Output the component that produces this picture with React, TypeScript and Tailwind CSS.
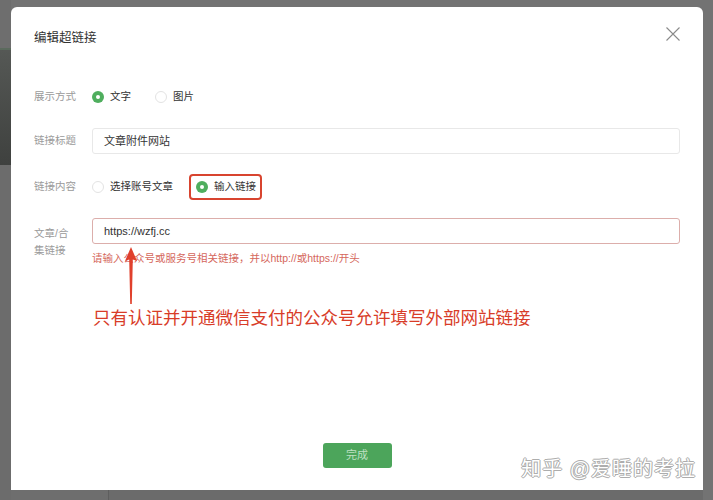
const font = { fontFamily: '"Liberation Sans", "Noto Sans CJK SC", sans-serif' }

function Radio({ checked }: { checked?: boolean }) {
  return checked ? (
    <span className="flex h-[12px] w-[12px] shrink-0 items-center justify-center rounded-full bg-[#4fae5e]">
      <span className="h-[4px] w-[4px] rounded-full bg-white" />
    </span>
  ) : (
    <span className="h-[12px] w-[12px] shrink-0 rounded-full border border-[#e3e3e3] bg-white" />
  )
}

export default function App() {
  return (
    <div
      className="flex h-[500px] w-[713px] overflow-hidden bg-[#737373] text-[#333]"
      style={font}
    >
      {/* page behind the modal */}
      <div className="flex w-[11px] shrink-0 flex-col">
        <div className="h-[48px] bg-[#6e6e6e]" />
        <div className="h-[2px] bg-[#5b6a5d]" />
        <div className="h-[115px] bg-gradient-to-b from-[#555855] to-[#3f413f]" />
        <div className="flex-1 bg-[#6c6c6c]" />
      </div>

      <div className="flex w-[692px] shrink-0 flex-col">
        <div className="h-[7px] shrink-0" />

        {/* modal */}
        <div className="relative flex h-[483px] flex-col rounded-t-[6px] bg-white px-[23px]">
          <div className="flex items-start justify-between pt-[24px]">
            <h1 className="text-[12.5px] leading-[14px] text-[#333]">编辑超链接</h1>
            <svg className="mr-[0px] mt-[-4px]" width="14" height="14" viewBox="0 0 14 14">
              <path d="M0.5 0.5 L13.5 13.5 M13.5 0.5 L0.5 13.5" stroke="#8a8a8a" strokeWidth="1.1" />
            </svg>
          </div>

          <div className="mt-[39px] flex flex-col">
            {/* 展示方式 */}
            <div className="flex h-[26px] items-center">
              <span className="w-[58px] shrink-0 text-[10.5px] text-[#9a9a9a]">展示方式</span>
              <label className="flex items-center gap-[6px] text-[10.5px] text-[#333]">
                <Radio checked />
                文字
              </label>
              <label className="ml-[24px] flex items-center gap-[6px] text-[10.5px] text-[#333]">
                <Radio />
                图片
              </label>
            </div>

            {/* 链接标题 */}
            <div className="mt-[18px] flex h-[26px] items-center">
              <span className="w-[58px] shrink-0 text-[10.5px] text-[#9a9a9a]">链接标题</span>
              <div className="flex h-[26px] w-[588px] items-center rounded-[3px] border border-[#e8e8e8] pl-[11px] text-[11px] text-[#333]">
                文章附件网站
              </div>
            </div>

            {/* 链接内容 */}
            <div className="mt-[20px] flex h-[26px] items-center">
              <span className="w-[58px] shrink-0 text-[10.5px] text-[#9a9a9a]">链接内容</span>
              <label className="flex items-center gap-[6px] text-[10.5px] text-[#333]">
                <Radio />
                选择账号文章
              </label>
              <label className="ml-[16px] flex h-[26px] items-center gap-[6px] rounded-[4px] border-2 border-[#d8442f] pl-[5px] pr-[4px] text-[10.5px] text-[#333]">
                <Radio checked />
                输入链接
              </label>
            </div>

            {/* 文章/合集链接 */}
            <div className="mt-[18px] flex items-start">
              <span className="w-[58px] shrink-0 pt-[7px] text-[10.5px] leading-[17px] text-[#9a9a9a]">
                文章/合
                <br />
                集链接
              </span>
              <div className="flex flex-col">
                <div className="flex h-[26px] w-[588px] items-center rounded-[3px] border border-[#dcaeab] pl-[11px] text-[11px] text-[#333]">
                  https://wzfj.cc
                </div>
                <p className="mt-[7px] text-[10.5px] leading-[14px] text-[#d5675c]">
                  请输入公众号或服务号相关链接，并以http://或https://开头
                </p>
              </div>
            </div>

            <p className="ml-[59px] mt-[41px] text-[17.5px] leading-[24px] text-[#d83c28]">
              只有认证并开通微信支付的公众号允许填写外部网站链接
            </p>
          </div>

          <div className="mt-auto flex justify-center pb-[22px]">
            <button className="h-[25px] w-[69px] rounded-[3px] bg-[#4ca55b] text-[11px] text-[#bfe0c2]">
              完成
            </button>
          </div>

          {/* annotation arrow */}
          <svg
            className="absolute left-[113px] top-[239px]"
            width="14"
            height="60"
            viewBox="0 0 14 60"
          >
            <path d="M7 1 L13 15 L8.8 13.5 L7.8 58 L6.2 58 L5.2 13.5 L1 15 Z" fill="#e0402c" />
          </svg>

          {/* watermark */}
          <span
            className="absolute bottom-[9px] right-[7px] text-[20px] leading-[24px] tracking-[1px] text-white"
            style={{
              textShadow:
                '0 0 1px #999, 1px 0 0 #b0b0b0, -1px 0 0 #b0b0b0, 0 1px 0 #b0b0b0, 0 -1px 0 #b0b0b0',
            }}
          >
            知乎 @爱睡的考拉
          </span>
        </div>

        <div className="flex h-[10px] shrink-0">
          <div className="w-[97px] bg-[#6e6e6e]" />
          <div className="w-px bg-[#5e5e5e]" />
          <div className="flex-1 bg-[#6b6b6b]" />
        </div>
      </div>
    </div>
  )
}
